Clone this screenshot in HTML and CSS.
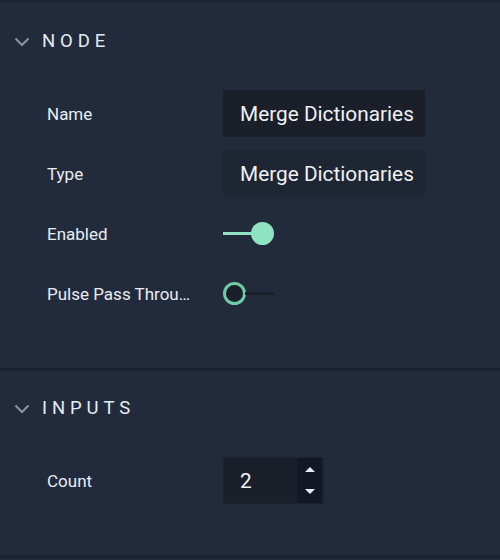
FILE: index.html
```html
<!DOCTYPE html>
<html>
<head>
<meta charset="utf-8">
<link rel="stylesheet" href="styles.css">
</head>
<body>
<div class="panel">
  <section class="section first">
    <div class="header">
      <svg class="chev" width="16" height="10" viewBox="0 0 16 10"><polyline points="1.5,1.5 8,8 14.5,1.5" fill="none" stroke="#8a93a3" stroke-width="2"/></svg>
      <span class="title">NODE</span>
    </div>
    <div class="rows">
      <div class="row">
        <div class="label">Name</div>
        <div class="field dark">Merge Dictionaries</div>
      </div>
      <div class="row">
        <div class="label">Type</div>
        <div class="field mid">Merge Dictionaries</div>
      </div>
      <div class="row">
        <div class="label">Enabled</div>
        <div class="toggle on"><span class="track"></span><span class="thumb"></span></div>
      </div>
      <div class="row">
        <div class="label">Pulse Pass Through</div>
        <div class="toggle off"><span class="thumb"></span><span class="track"></span></div>
      </div>
    </div>
  </section>
  <section class="section second">
    <div class="header">
      <svg class="chev" width="16" height="10" viewBox="0 0 16 10"><polyline points="1.5,1.5 8,8 14.5,1.5" fill="none" stroke="#8a93a3" stroke-width="2"/></svg>
      <span class="title">INPUTS</span>
    </div>
    <div class="rows">
      <div class="row">
        <div class="label">Count</div>
        <div class="number">
          <span class="value">2</span>
          <span class="spin">
            <svg width="10" height="5" viewBox="0 0 10 5"><polygon points="0,5 5,0 10,5" fill="#e8ecf2"/></svg>
            <svg width="10" height="5" viewBox="0 0 10 5"><polygon points="0,0 10,0 5,5" fill="#e8ecf2"/></svg>
          </span>
        </div>
      </div>
    </div>
  </section>
</div>
</body>
</html>
```

FILE: styles.css
```css
html, body {
  margin: 0;
  padding: 0;
  background: #222b3b;
}
body {
  width: 500px;
  height: 560px;
  overflow: hidden;
  font-family: Roboto, "Liberation Sans", sans-serif;
  color: #e8edf5;
}
.panel {
  border-top: 2px solid #1d2432;
}
.section {
  padding: 27px 0 51px 0;
  border-bottom: 3px solid #1b2230;
}
.second {
  padding-top: 25px;
}
.header {
  display: flex;
  align-items: center;
  height: 24px;
  padding-left: 14px;
}
.chev {
  margin-right: 12px;
  margin-top: 1px;
}
.title {
  font-size: 18.5px;
  letter-spacing: 4.9px;
  color: #e6ebf3;
  font-weight: 400;
}
.rows {
  margin-top: 37px;
  display: flex;
  flex-direction: column;
  gap: 13px;
}
.row {
  display: flex;
  align-items: center;
  height: 47px;
  padding-left: 47px;
}
.label {
  width: 150px;
  margin-right: 26px;
  font-size: 17px;
  white-space: nowrap;
  overflow: hidden;
  text-overflow: ellipsis;
  color: #e8edf5;
}
.field {
  width: 185px;
  height: 47px;
  padding-left: 17px;
  display: flex;
  align-items: center;
  font-size: 20.8px;
  color: #eef2f8;
  white-space: nowrap;
}
.dark { background: #1a1f29; }
.mid { background: #1e2533; }
.toggle {
  display: flex;
  align-items: center;
  width: 51px;
  height: 24px;
}
.toggle .thumb {
  width: 23px;
  height: 23px;
  border-radius: 50%;
  box-sizing: border-box;
  flex: none;
}
.toggle .track {
  height: 3px;
  flex: 1;
}
.on .track { background: #8fe3c3; margin-right: -2px; }
.on .thumb { background: #8fe3c3; }
.off .thumb { background: #1a1f29; border: 3px solid #6fcaa5; }
.off .track { background: #1a1f29; margin-left: -1px; }
.number {
  width: 101px;
  height: 47px;
  box-sizing: border-box;
  border: 1px solid #1d2330;
  background: #1a1f29;
  display: flex;
  align-items: stretch;
}
.value {
  flex: 1;
  padding-left: 16px;
  display: flex;
  align-items: center;
  font-size: 20.8px;
  color: #eef2f8;
}
.spin {
  width: 25px;
  margin-right: 1px;
  background: #121826;
  display: flex;
  flex-direction: column;
  align-items: center;
  justify-content: center;
  gap: 17px;
}
.spin svg { display: block; }
```
